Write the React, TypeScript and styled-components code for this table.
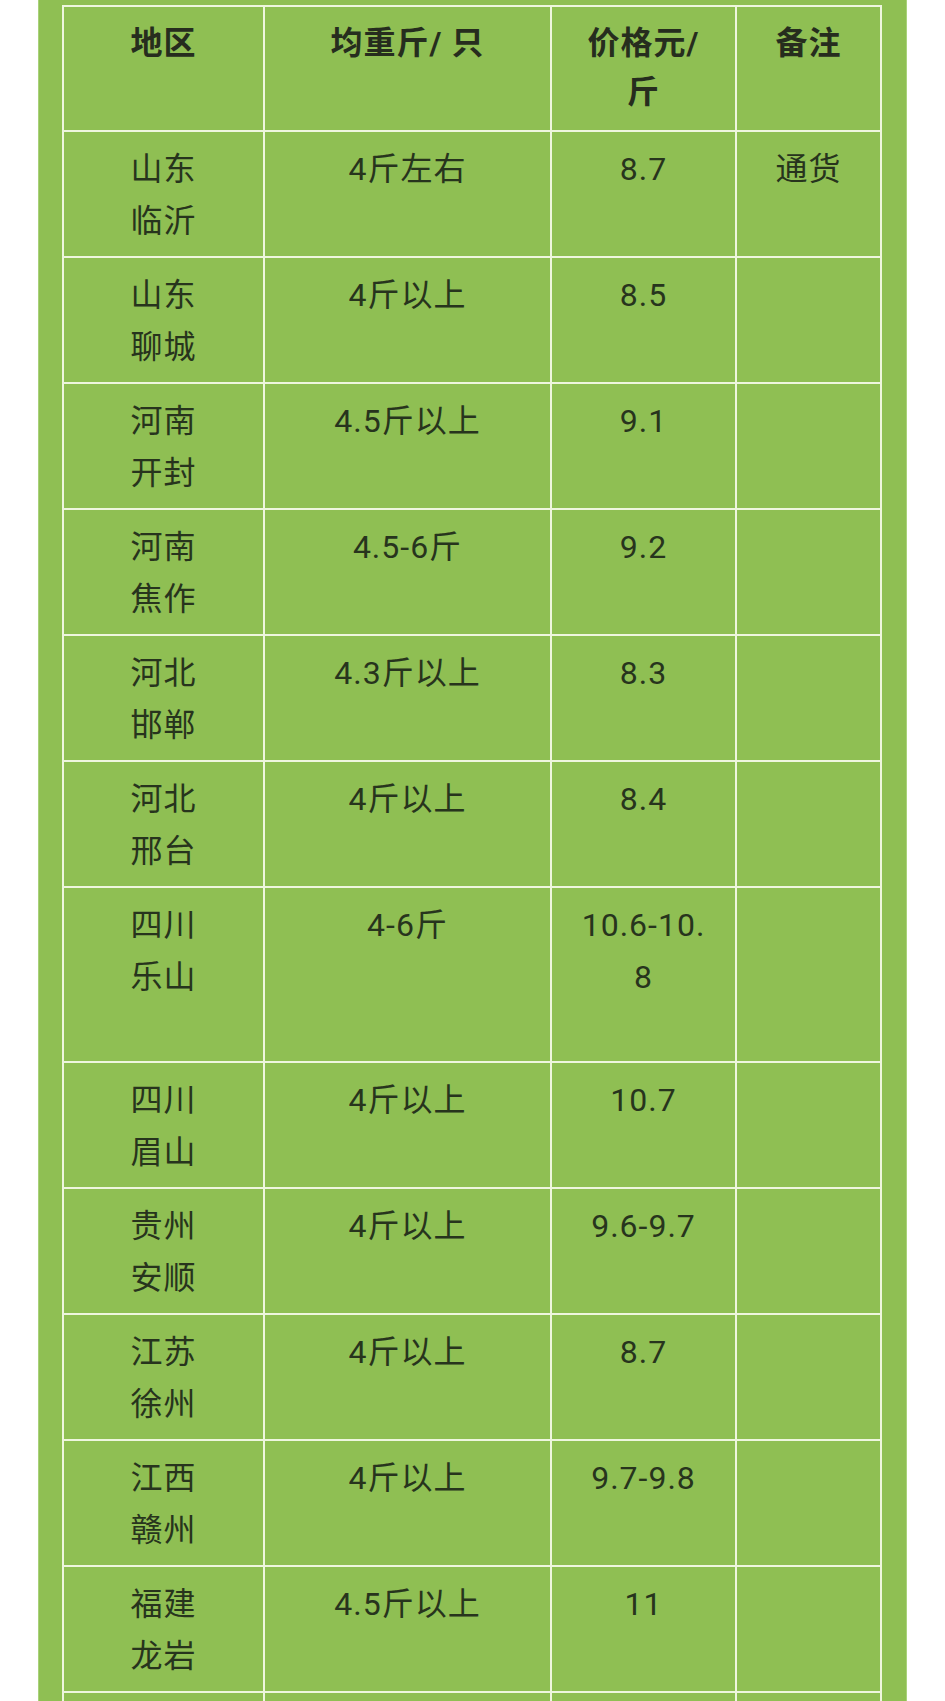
import React from "react";
import styled, { createGlobalStyle } from "styled-components";

const GlobalStyle = createGlobalStyle`
  html, body {
    margin: 0;
    padding: 0;
    background: #ffffff;
  }
  body {
    font-family: Roboto, "Noto Sans CJK SC", sans-serif;
  }
`;

type PriceRow = {
  region: [string, string];
  weight: string;
  price: string;
  note?: string;
  tall?: boolean;
};

const ROWS: PriceRow[] = [
  { region: ["山东", "临沂"], weight: "4斤左右", price: "8.7", note: "通货" },
  { region: ["山东", "聊城"], weight: "4斤以上", price: "8.5" },
  { region: ["河南", "开封"], weight: "4.5斤以上", price: "9.1" },
  { region: ["河南", "焦作"], weight: "4.5-6斤", price: "9.2" },
  { region: ["河北", "邯郸"], weight: "4.3斤以上", price: "8.3" },
  { region: ["河北", "邢台"], weight: "4斤以上", price: "8.4" },
  { region: ["四川", "乐山"], weight: "4-6斤", price: "10.6-10.8", tall: true },
  { region: ["四川", "眉山"], weight: "4斤以上", price: "10.7" },
  { region: ["贵州", "安顺"], weight: "4斤以上", price: "9.6-9.7" },
  { region: ["江苏", "徐州"], weight: "4斤以上", price: "8.7" },
  { region: ["江西", "赣州"], weight: "4斤以上", price: "9.7-9.8" },
  { region: ["福建", "龙岩"], weight: "4.5斤以上", price: "11" },
];

const Viewport = styled.div`
  height: 1701px;
  overflow: hidden;
`;

const Panel = styled.section`
  margin-left: 38px;
  width: 869px;
  box-sizing: border-box;
  padding: 5px 24px 40px 23px;
  background-color: #8fbf53;
  border-left: 1px solid #a9d27a;
  border-right: 1px solid #a9d27a;
  min-height: 1800px;
`;

const Table = styled.table`
  width: 818px;
  border-collapse: collapse;
  table-layout: fixed;
  color: #27341d;
`;

const HeadCell = styled.th`
  border: 2px solid #eef6de;
  padding: 12px 22px 13px;
  font-size: 32px;
  line-height: 49px;
  font-weight: 700;
  letter-spacing: 1px;
  color: #262d1e;
  text-align: center;
  vertical-align: top;
  word-break: break-all;
`;

const BodyRow = styled.tr<{ $tall?: boolean }>`
  height: ${(p) => (p.$tall ? "175px" : "124px")};
`;

const Cell = styled.td`
  border: 2px solid #eef6de;
  padding: 11px 28px 9px;
  font-size: 32px;
  line-height: 52px;
  letter-spacing: 1px;
  text-align: center;
  vertical-align: top;
  word-break: break-all;
`;

const Line = styled.span`
  display: block;
`;

export default function App() {
  return (
    <>
      <GlobalStyle />
      <Viewport>
        <Panel>
          <Table>
            <colgroup>
              <col style={{ width: 201 }} />
              <col style={{ width: 287 }} />
              <col style={{ width: 185 }} />
              <col style={{ width: 145 }} />
            </colgroup>
            <thead>
              <tr>
                <HeadCell>地区</HeadCell>
                <HeadCell>均重斤/ 只</HeadCell>
                <HeadCell>价格元/斤</HeadCell>
                <HeadCell>备注</HeadCell>
              </tr>
            </thead>
            <tbody>
              {ROWS.map((row) => (
                <BodyRow key={row.region.join("")} $tall={row.tall}>
                  <Cell>
                    <Line>{row.region[0]}</Line>
                    <Line>{row.region[1]}</Line>
                  </Cell>
                  <Cell>{row.weight}</Cell>
                  <Cell>{row.price}</Cell>
                  <Cell>{row.note ?? ""}</Cell>
                </BodyRow>
              ))}
              <BodyRow>
                <Cell />
                <Cell />
                <Cell />
                <Cell />
              </BodyRow>
            </tbody>
          </Table>
        </Panel>
      </Viewport>
    </>
  );
}
